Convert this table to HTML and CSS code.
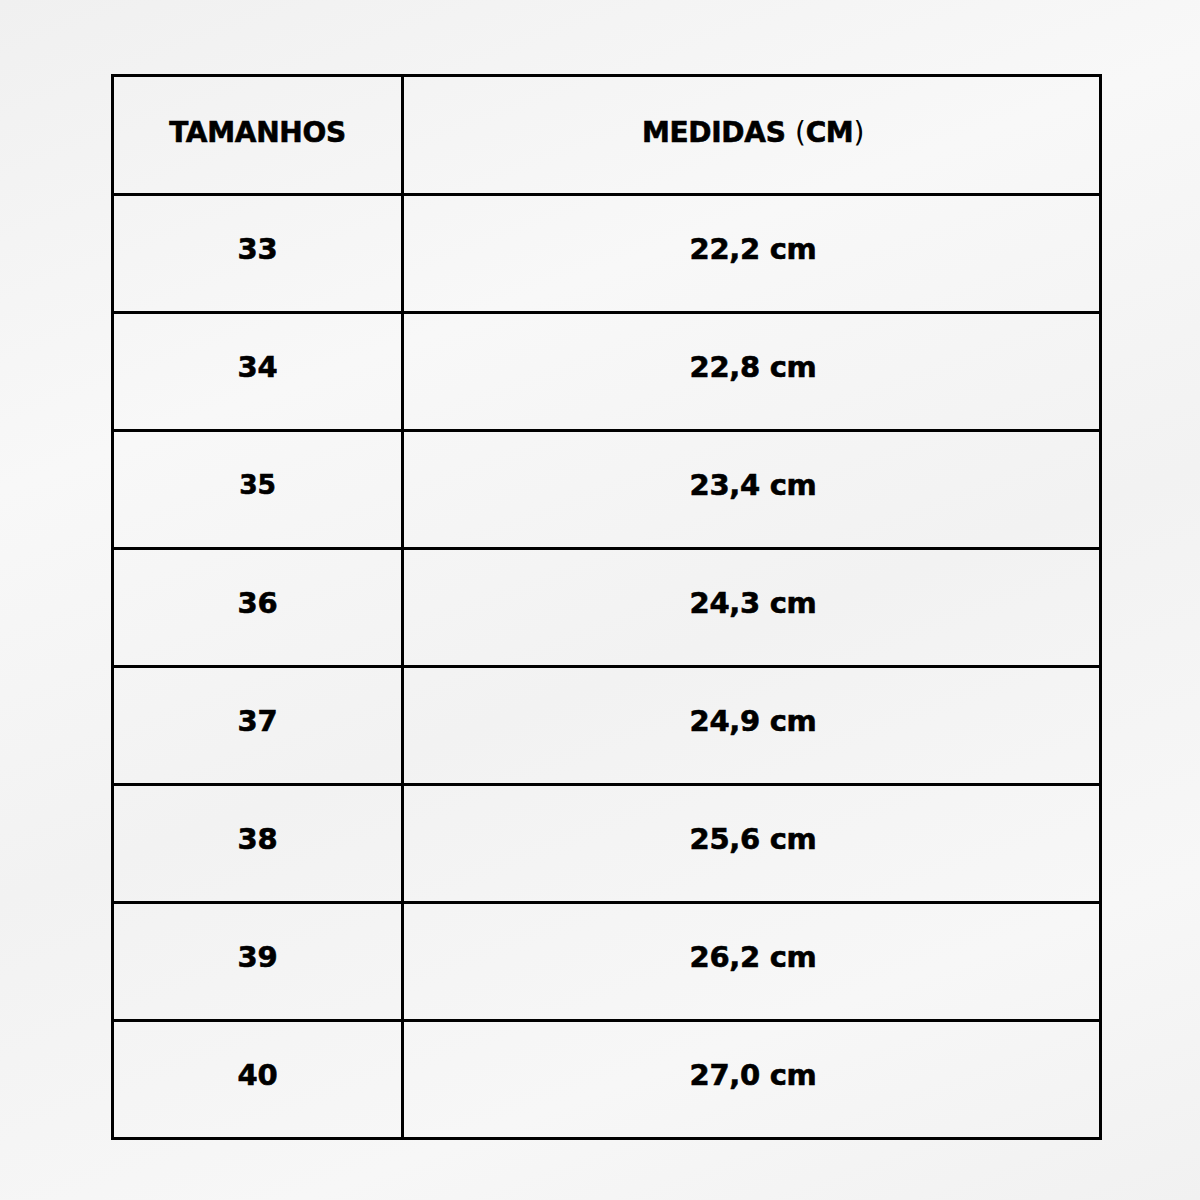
FILE: index.html
```html
<!DOCTYPE html>
<html lang="pt">
<head>
<meta charset="utf-8">
<title>Tabela de medidas</title>
<link rel="stylesheet" href="styles.css">
</head>
<body>
<div class="page">
  <div class="table">
    <div class="cell head"><span>TAMANHOS</span></div>
    <div class="cell head val"><span>MEDIDAS <span class="paren">(</span>CM<span class="paren">)</span></span></div>

    <div class="cell row">33</div>
    <div class="cell row val">22,2 cm</div>

    <div class="cell row">34</div>
    <div class="cell row val">22,8 cm</div>

    <div class="cell row small">35</div>
    <div class="cell row val">23,4 cm</div>

    <div class="cell row">36</div>
    <div class="cell row val">24,3 cm</div>

    <div class="cell row">37</div>
    <div class="cell row val">24,9 cm</div>

    <div class="cell row">38</div>
    <div class="cell row val">25,6 cm</div>

    <div class="cell row">39</div>
    <div class="cell row val">26,2 cm</div>

    <div class="cell row">40</div>
    <div class="cell row val">27,0 cm</div>
  </div>
</div>
</body>
</html>
```
FILE: styles.css
```css
* { box-sizing: border-box; }

html, body {
  margin: 0;
  padding: 0;
}

body {
  width: 1200px;
  height: 1200px;
  background: linear-gradient(160deg, #f0f0f0 0%, #f8f8f8 30%, #f2f2f2 55%, #f7f7f7 80%, #f1f1f1 100%);
  font-family: "DejaVu Sans", "Liberation Sans", sans-serif;
  color: #000;
}

.page {
  padding: 74px 0 0 111px;
}

.table {
  display: grid;
  grid-template-columns: 290px 701px;
  width: 991px;
  border-right: 3px solid #000;
  border-bottom: 3px solid #000;
}

.cell {
  display: flex;
  align-items: center;
  justify-content: center;
  border-top: 3px solid #000;
  border-left: 3px solid #000;
  height: 118px;
  font-weight: bold;
  white-space: nowrap;
  -webkit-text-stroke: 0.6px #000;
  letter-spacing: -0.3px;
}

.head {
  height: 119px;
  font-size: 28px;
  padding-bottom: 5px;
}

.row {
  font-size: 29px;
  padding-bottom: 10px;
}

.row.small {
  font-size: 26.5px;
}

.paren {
  font-weight: normal;
  -webkit-text-stroke: 0;
}
```
